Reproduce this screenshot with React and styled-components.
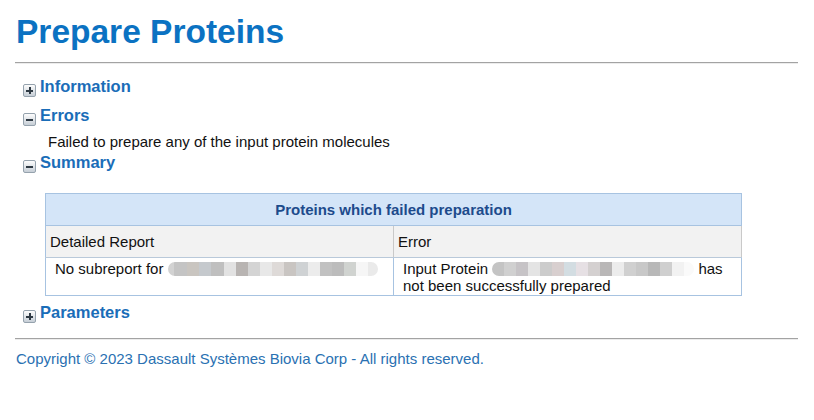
import React from "react";
import styled, { createGlobalStyle } from "styled-components";

const GlobalStyle = createGlobalStyle`
  body {
    margin: 0;
    background: #fff;
    font-family: "Liberation Sans", Arial, sans-serif;
  }
`;

const Page = styled.div`
  padding: 0 16px 0 15px;
  width: 814px;
  box-sizing: border-box;
`;

const Title = styled.h1`
  margin: 0;
  padding-top: 13px;
  font-size: 33.5px;
  line-height: 38px;
  font-weight: bold;
  color: #0b72c2;
  padding-left: 1px;
`;

const Rule = styled.hr`
  margin: ${(p) => p.top}px 0 0;
  height: 0;
  border: 0;
  border-top: 1px solid #a3a3a3;
  border-bottom: 1px solid #ececec;
`;

const Section = styled.div`
  margin-top: ${(p) => p.gap}px;
  padding-left: 8px;
`;

const Heading = styled.div`
  display: flex;
  align-items: flex-end;
  gap: 4px;
  font-size: 16.5px;
  line-height: 22px;
  font-weight: bold;
  color: #1a6db8;
`;

const Toggle = styled.span`
  position: relative;
  width: 11px;
  height: 11px;
  border: 1px solid #95a2ad;
  border-radius: 2px;
  background: linear-gradient(#fdfdfd, #c6ced6);
  flex: none;

  &::before {
    content: "";
    position: absolute;
    left: 2px;
    right: 2px;
    top: 5px;
    height: 1.5px;
    background: #2f3a44;
  }
  &::after {
    content: "";
    display: ${(p) => (p.open ? "none" : "block")};
    position: absolute;
    top: 2px;
    bottom: 2px;
    left: 5px;
    width: 1.5px;
    background: #2f3a44;
  }
`;

const Text = styled.div`
  margin-top: 7px;
  padding-left: 25px;
  font-size: 15px;
  line-height: 18px;
  color: #111;
`;

const Table = styled.table`
  margin: 20px 0 0 22px;
  width: 697px;
  border-collapse: collapse;
  border: 1px solid #a7c3e1;
  font-size: 15px;
  color: #111;
`;

const Caption = styled.th`
  height: 31px;
  padding: 0;
  background: #d4e5f8;
  color: #1d4b8c;
  font-weight: bold;
  text-align: center;
  border-bottom: 1px solid #a7c3e1;
`;

const HeadCell = styled.td`
  width: 50%;
  height: 31px;
  padding: 0 4px;
  background: #f2f2f2;
  border-right: 1px solid #c9c9c9;
  border-bottom: 1px solid #b9c9da;
  font-weight: normal;
  vertical-align: middle;
`;

const Cell = styled.td`
  padding: 2px 8px 1px 9px;
  line-height: 17px;
  vertical-align: top;
  border-right: 1px solid #a7c3e1;
`;

const Redacted = styled.span`
  display: inline-flex;
  vertical-align: -2px;
  height: 14px;
  border-radius: 7px;
  overflow: hidden;
  filter: blur(0.4px);
`;

const Pixel = styled.span`
  width: ${(p) => p.w}px;
  height: 100%;
  background: ${(p) => p.c};
`;

const Footer = styled.div`
  margin-top: 10px;
  padding-left: 1px;
  font-size: 15px;
  line-height: 18px;
  color: #2a71b2;
`;

const firstBlur = [
  ["#d2d2d2", 6], ["#c4c4c4", 13], ["#c9c5c0", 12], ["#c5c9cd", 12], ["#bfbfbf", 13],
  ["#e2e2e2", 12], ["#b8b4b2", 12], ["#d4d4d4", 12], ["#e8e8e8", 12], ["#dedad8", 12],
  ["#c9c5c2", 12], ["#cfd2d4", 12], ["#ececec", 12], ["#c1c1c1", 12], ["#bcbcbc", 12],
  ["#d0d3d0", 12], ["#f6f6f6", 12], ["#eaeaea", 10],
];

const secondBlur = [
  ["#c4c4c4", 12], ["#d0d0d0", 12], ["#c6c3c6", 12], ["#e4e4e4", 12], ["#cccccc", 12],
  ["#d8cfcf", 12], ["#d3dde2", 12], ["#e6e0e4", 12], ["#d4d0d0", 12], ["#b9b7b7", 12],
  ["#ececec", 12], ["#d0d0d0", 12], ["#c8c8c8", 12], ["#b8b8b8", 12], ["#cfcfcf", 12],
  ["#f2f2f2", 12], ["#fafafa", 10],
];

const Blur = ({ cells }) => (
  <Redacted>
    {cells.map(([c, w], i) => (
      <Pixel key={i} c={c} w={w} />
    ))}
  </Redacted>
);

const App = () => (
  <>
    <GlobalStyle />
    <Page>
      <Title>Prepare Proteins</Title>
      <Rule top={11} />

      <Section gap={11}>
        <Heading>
          <Toggle />
          Information
        </Heading>
      </Section>

      <Section gap={7}>
        <Heading>
          <Toggle open />
          Errors
        </Heading>
        <Text>Failed to prepare any of the input protein molecules</Text>
      </Section>

      <Section gap={0}>
        <Heading>
          <Toggle open />
          Summary
        </Heading>
        <Table>
          <thead>
            <tr>
              <Caption colSpan={2}>Proteins which failed preparation</Caption>
            </tr>
          </thead>
          <tbody>
            <tr>
              <HeadCell>Detailed Report</HeadCell>
              <HeadCell>Error</HeadCell>
            </tr>
            <tr>
              <Cell>
                No subreport for <Blur cells={firstBlur} />
              </Cell>
              <Cell>
                Input Protein <Blur cells={secondBlur} /> has not been successfully prepared
              </Cell>
            </tr>
          </tbody>
        </Table>
      </Section>

      <Section gap={5}>
        <Heading>
          <Toggle />
          Parameters
        </Heading>
      </Section>

      <Rule top={15} />
      <Footer>Copyright © 2023 Dassault Systèmes Biovia Corp - All rights reserved.</Footer>
    </Page>
  </>
);

export default App;
